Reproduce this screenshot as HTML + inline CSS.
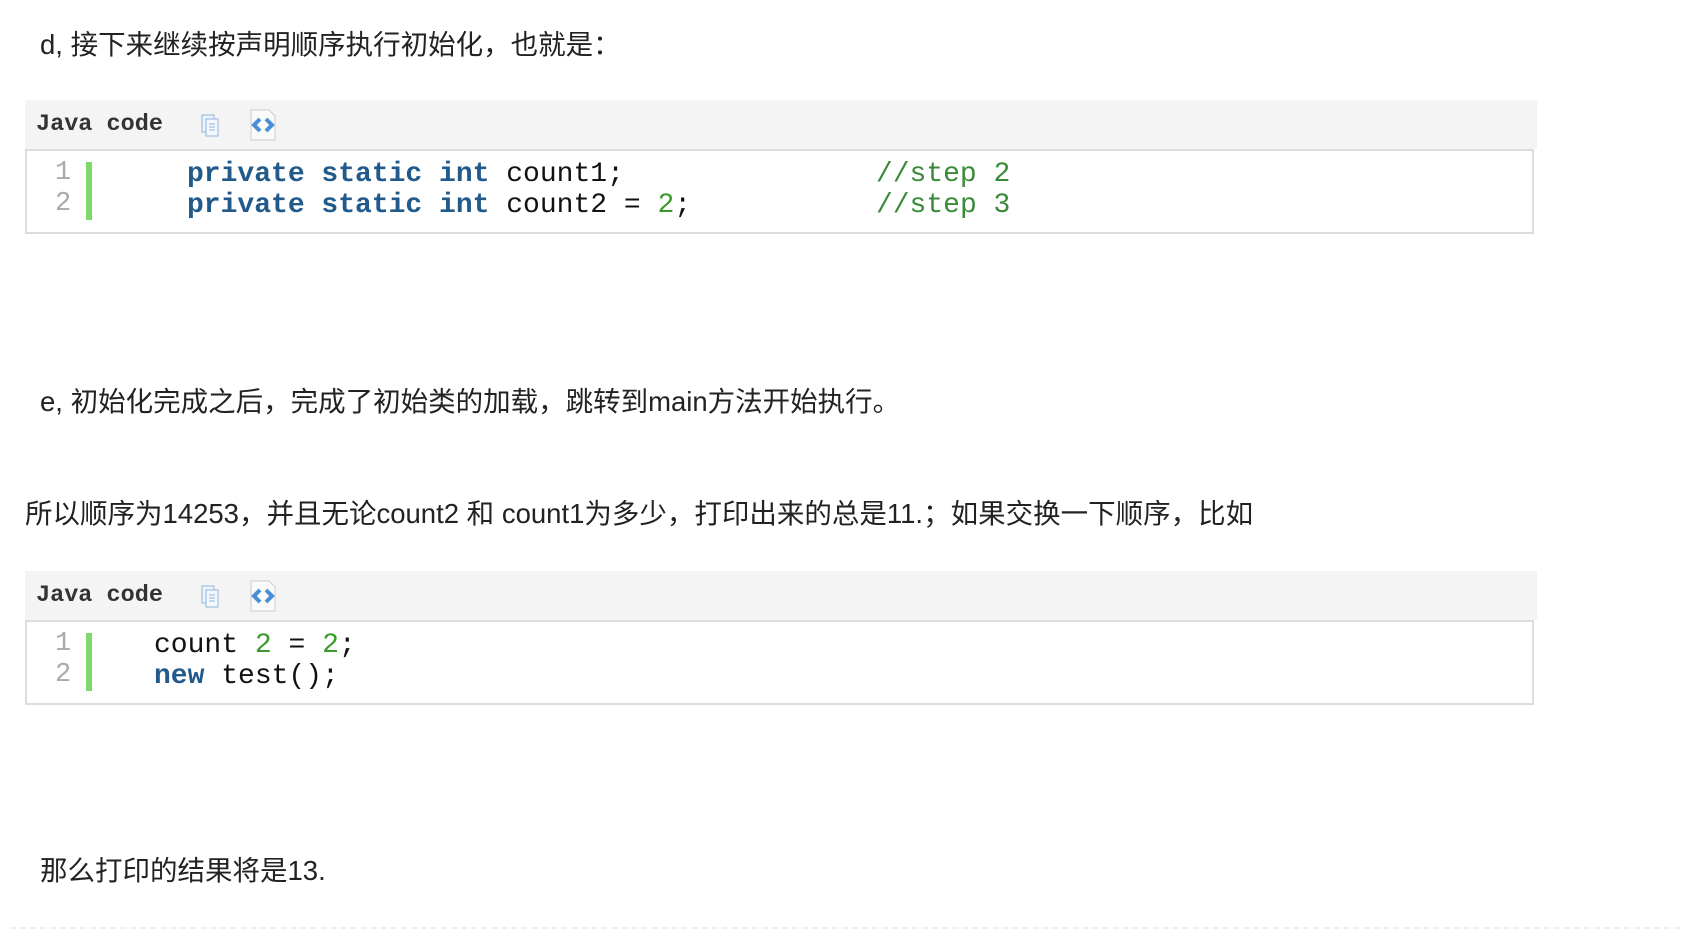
<!DOCTYPE html>
<html><head><meta charset="utf-8"><style>
body{margin:0;width:1682px;height:938px;background:#fff;position:relative;overflow:hidden;font-family:"Liberation Sans","Noto Sans CJK SC",sans-serif;color:#222}
.t{position:absolute;font-size:27.5px;line-height:30px;white-space:nowrap}
.hd{position:absolute;left:25px;width:1512px;height:49px;background:#f4f4f4}
.hd b{position:absolute;left:11px;top:11px;font:bold 23.5px "Liberation Mono",monospace;color:#333}
.box{position:absolute;left:25px;width:1505px;border:2px solid #ddd;background:#fff}
.ln{position:absolute;left:55px;font:27px "Liberation Mono",monospace;color:#aaa}
.bar{position:absolute;left:86px;width:6px;background:#7ed96b}
.c{position:absolute;font:28px/31px "Liberation Mono",monospace;color:#111;white-space:pre}
.k{color:#225a8c;font-weight:bold}.n{color:#3a9a2a}.cm{color:#3a8a3a}
.ic{position:absolute}
</style></head><body>
<div class="t" style="left:40px;top:30px">d, 接下来继续按声明顺序执行初始化，也就是：</div>

<div class="hd" style="top:100px"><b>Java code</b>
<svg class="ic" style="left:172px;top:12px" width="26" height="26" viewBox="0 0 26 26"><rect x="5" y="3" width="12" height="17" fill="#eef4fc" stroke="#8fb5e0"/><rect x="9" y="7" width="12" height="17" fill="#f4f8fd" stroke="#8fb5e0"/><path d="M12 12h6M12 15h6M12 18h6" stroke="#8fb5e0"/></svg>
<svg class="ic" style="left:222px;top:8px" width="32" height="34" viewBox="0 0 32 34"><path d="M4 2h18l6 6v24H4z" fill="#fafafa" stroke="#ccc"/><path d="M13 11l-6 6 6 6M19 11l6 6-6 6" stroke="#4a8fd6" stroke-width="4" fill="none"/></svg>
</div>
<div class="box" style="top:149px;height:81px"></div>
<div class="ln" style="top:158px">1</div><div class="ln" style="top:189px">2</div>
<div class="bar" style="top:162px;height:58px"></div>
<div class="c" style="left:187px;top:159px"><span class="k">private static int</span> count1;               <span class="cm">//step 2</span>
<span class="k">private static int</span> count2 = <span class="n">2</span>;           <span class="cm">//step 3</span></div>

<div class="t" style="left:40px;top:387px">e, 初始化完成之后，完成了初始类的加载，跳转到main方法开始执行。</div>
<div class="t" style="left:25px;top:499px">所以顺序为14253，并且无论count2 和 count1为多少，打印出来的总是11.；如果交换一下顺序，比如</div>

<div class="hd" style="top:571px"><b>Java code</b>
<svg class="ic" style="left:172px;top:12px" width="26" height="26" viewBox="0 0 26 26"><rect x="5" y="3" width="12" height="17" fill="#eef4fc" stroke="#8fb5e0"/><rect x="9" y="7" width="12" height="17" fill="#f4f8fd" stroke="#8fb5e0"/><path d="M12 12h6M12 15h6M12 18h6" stroke="#8fb5e0"/></svg>
<svg class="ic" style="left:222px;top:8px" width="32" height="34" viewBox="0 0 32 34"><path d="M4 2h18l6 6v24H4z" fill="#fafafa" stroke="#ccc"/><path d="M13 11l-6 6 6 6M19 11l6 6-6 6" stroke="#4a8fd6" stroke-width="4" fill="none"/></svg>
</div>
<div class="box" style="top:620px;height:81px"></div>
<div class="ln" style="top:629px">1</div><div class="ln" style="top:660px">2</div>
<div class="bar" style="top:633px;height:58px"></div>
<div class="c" style="left:154px;top:630px">count <span class="n">2</span> = <span class="n">2</span>;
<span class="k">new</span> test();</div>

<div class="t" style="left:40px;top:856px">那么打印的结果将是13.</div>
<div style="position:absolute;left:10px;top:927px;width:1670px;border-top:2px dashed #eee"></div>
</body></html>
